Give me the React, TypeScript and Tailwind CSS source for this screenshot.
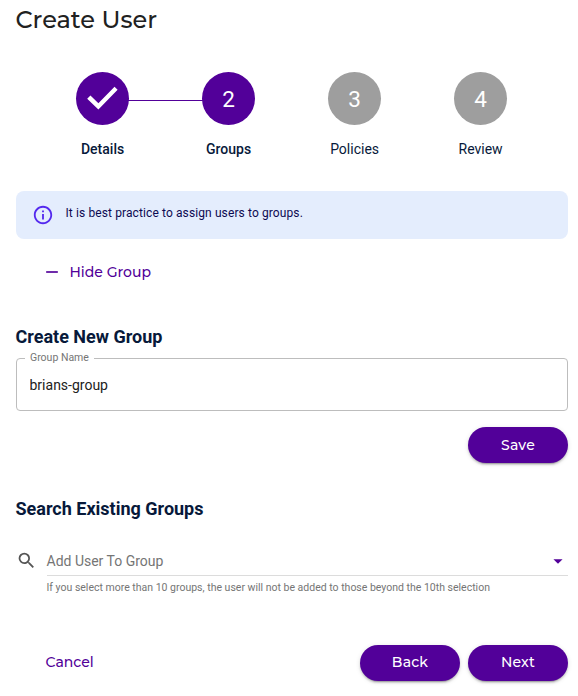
import { useState } from 'react';
import { clsx } from 'clsx';
import { MdArrowDropDown, MdOutlineInfo, MdRemove, MdSearch } from 'react-icons/md';

const steps = ['Details', 'Groups', 'Policies', 'Review'];
const activeStep = 1;

const displayFont = 'font-[Montserrat,Inter,sans-serif] font-medium';

function CheckMark() {
  return (
    <svg viewBox="0 0 53 53" className="size-full" fill="currentColor">
      <path d="M11.3 27.1 14.6 23.8 22.6 31.6 38.9 14.9 42 18 22.6 37.8z" />
    </svg>
  );
}

function Stepper() {
  return (
    <div className="mt-[36px] ml-[39.6px] flex w-[504px]">
      {steps.map((label, i) => (
        <div key={label} className="relative flex w-[126px] flex-col items-center">
          {i > 0 && i <= activeStep && (
            <div className="absolute top-[28px] right-[88px] w-[76px] border-t border-[#520099]" />
          )}
          <div
            className={clsx(
              'relative flex size-[52.5px] items-center justify-center rounded-full text-[22.5px] leading-none text-white',
              i <= activeStep ? 'bg-[#520099]' : 'bg-[#9e9e9e]'
            )}
          >
            {i < activeStep ? <CheckMark /> : <span className="pt-[2px]">{i + 1}</span>}
          </div>
          <span
            className={clsx(
              'mt-[14.5px] text-[14px] leading-5 text-[#07193a]',
              i <= activeStep && 'font-medium'
            )}
          >
            {label}
          </span>
        </div>
      ))}
    </div>
  );
}

function PillButton({ label, className }: { label: string; className?: string }) {
  return (
    <button
      className={clsx(
        'flex h-9 w-[100px] items-center justify-center rounded-full bg-[#520099] text-[14px] tracking-[0.2px] text-white shadow-[0_3px_1px_-2px_rgba(0,0,0,0.2),0_2px_2px_0_rgba(0,0,0,0.14),0_1px_5px_0_rgba(0,0,0,0.12)]',
        displayFont,
        className
      )}
    >
      {label}
    </button>
  );
}

export default function App() {
  const [groupName, setGroupName] = useState('brians-group');

  return (
    <div className="h-[696px] w-[578px] overflow-hidden bg-white pr-[10px] pl-4 font-[Roboto,sans-serif]">
      <h1 className={clsx('h-9 pt-[4px] text-[24px] leading-8 text-[#212121]', displayFont)}>
        <span className="-ml-[0.5px]">Create User</span>
      </h1>

      <div className="-ml-4">
        <Stepper />
      </div>

      <div className="mt-[32px] flex h-12 items-center rounded-lg bg-[#e4edfd] pl-4">
        <MdOutlineInfo className="size-[22px] text-[#5429ee]" />
        <span className="ml-[11.5px] pb-[4px] text-[12px] leading-4 tracking-[0.11px] text-[#0d0a52]">
          It is best practice to assign users to groups.
        </span>
      </div>

      <button
        className={clsx(
          'mt-[23px] ml-[26px] flex h-5 items-center text-[14px] text-[#520099]',
          displayFont
        )}
      >
        <MdRemove className="size-5" />
        <span className="ml-[7.5px]">Hide Group</span>
      </button>

      <h2 className="mt-[43px] -ml-[0.5px] text-[18px] leading-6 font-bold text-[#07193a]">Create New Group</h2>
      <fieldset className="mt-[3px] h-[59px] rounded-[4px] border border-[#bdbdbd] pl-2">
        <legend className="h-3 px-[5px] text-[10.5px] leading-3 text-[#757575]">Group Name</legend>
        <input
          value={groupName}
          onChange={(e) => setGroupName(e.target.value)}
          className="mt-[11px] block w-[500px] pl-[4.5px] text-[14px] leading-5 text-[#212121] outline-none"
        />
      </fieldset>

      <div className="mt-4 flex justify-end">
        <PillButton label="Save" />
      </div>

      <h2 className="mt-[34px] -ml-[0.5px] text-[18px] leading-6 font-bold text-[#07193a]">Search Existing Groups</h2>

      <div className="mt-[25px] flex">
        <MdSearch className="mt-1 size-[21px] text-[#555]" />
        <div className="ml-[9.5px] flex-1">
          <div className="flex h-[30px] items-center justify-between border-b border-[#dcdcdc]">
            <span className="pt-[2px] text-[14px] text-[#757575]">Add User To Group</span>
            <MdArrowDropDown className="-mr-[0.5px] size-[22px] text-[#520099]" />
          </div>
          <p className="mt-[6px] text-[10.5px] leading-3 text-[#757575]">
            If you select more than 10 groups, the user will not be added to those beyond the 10th selection
          </p>
        </div>
      </div>

      <div className="mt-[51px] flex items-center">
        <button className={clsx('ml-[29.5px] pb-px text-[14px] text-[#520099]', displayFont)}>Cancel</button>
        <div className="ml-auto flex gap-2">
          <PillButton label="Back" className="pb-px" />
          <PillButton label="Next" className="pb-px" />
        </div>
      </div>
    </div>
  );
}
